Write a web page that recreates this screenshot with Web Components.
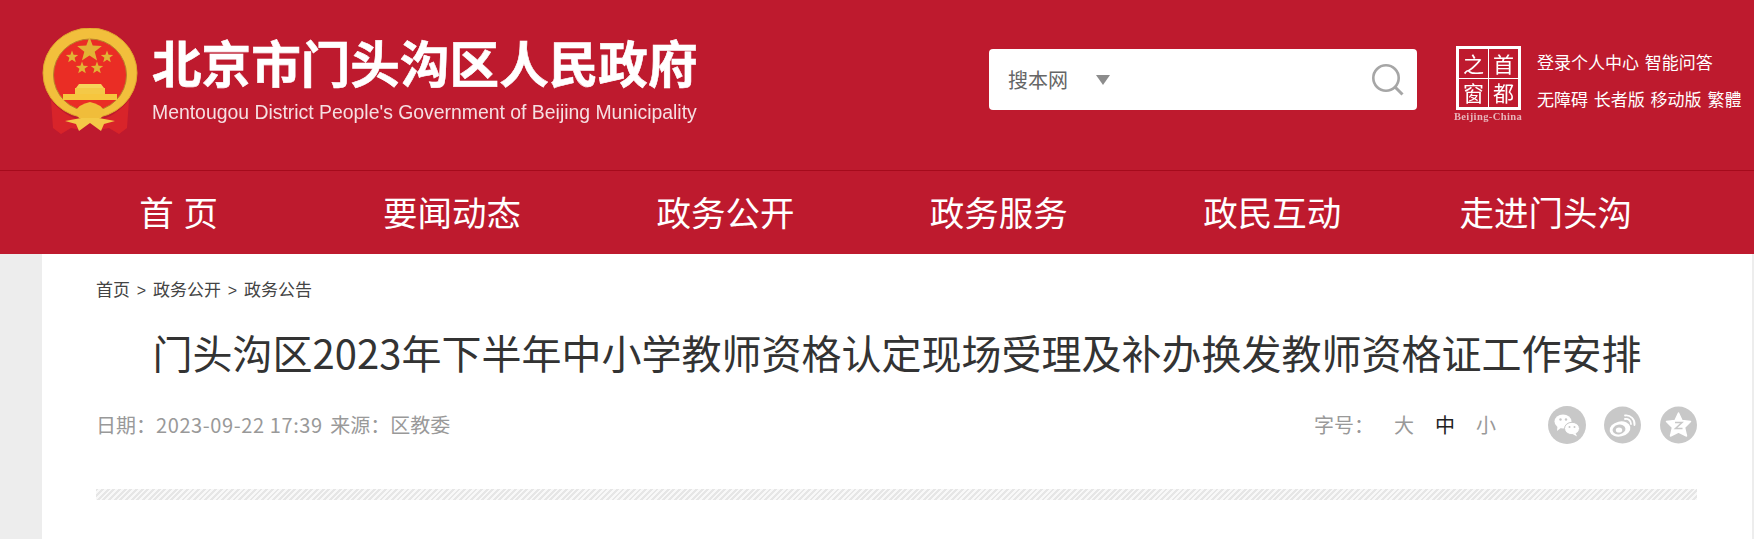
<!DOCTYPE html>
<html lang="zh-CN">
<head>
<meta charset="utf-8">
<title>门头沟区人民政府</title>
<style>
    html, body { margin: 0; padding: 0; background: #ededed; overflow: hidden; }
    body { font-family: "Noto Sans CJK SC", "Liberation Sans", sans-serif; height: 539px; }
</style>
</head>
<body>
<mtg-header></mtg-header>
<mtg-nav>
    <a>首 页</a><a>要闻动态</a><a>政务公开</a><a>政务服务</a><a>政民互动</a><a>走进门头沟</a>
</mtg-nav>
<mtg-page>
    <mtg-crumbs>
        <span>首页</span><span>政务公开</span><span>政务公告</span>
    </mtg-crumbs>
    <mtg-title>门头沟区2023年下半年中小学教师资格认定现场受理及补办换发教师资格证工作安排</mtg-title>
    <mtg-meta date="2023-09-22 17:39" source="区教委"></mtg-meta>
</mtg-page>

<script>
const SANS = '"Noto Sans CJK SC", "Liberation Sans", sans-serif';

class Base extends HTMLElement {
    constructor() {
        super();
        this.root = this.attachShadow({ mode: 'open' });
        this.root.innerHTML = `<style>${this.css()}</style>${this.render()}`;
    }
    css() { return ''; }
    render() { return '<slot></slot>'; }
}

class MtgEmblem extends Base {
    css() { return `:host { display: block; width: 98px; height: 108px; filter: blur(.5px); } svg { display: block; }`; }
    render() {
        const star = (x, y, r) => {
            let p = [];
            for (let i = 0; i < 10; i++) {
                const a = -Math.PI / 2 + i * Math.PI / 5;
                const q = i % 2 ? r * .42 : r;
                p.push((x + q * Math.cos(a)).toFixed(1) + ',' + (y + q * Math.sin(a)).toFixed(1));
            }
            return `<polygon points="${p.join(' ')}" fill="#e2b335"/>`;
        };
        return `<svg width="98" height="108" viewBox="0 0 98 108">
            <ellipse cx="49" cy="45" rx="47" ry="45" fill="#f2bf3c" stroke="#dfa62e" stroke-width="1"/>
            <ellipse cx="49" cy="47" rx="36.5" ry="36" fill="#ea2d25" stroke="#b9812b" stroke-width="1"/>
            ${star(48.5, 22, 13)}${star(31, 29, 6.5)}${star(66, 29, 6.5)}${star(41, 40, 6.5)}${star(56, 40, 6.5)}
            <path d="M38 56 H60 L63 60 H35 Z" fill="#f7d35a"/>
            <rect x="34" y="60" width="30" height="6" fill="#f4c947"/>
            <rect x="22" y="66" width="54" height="6" fill="#f6c63e"/>
            <path d="M10 72 C20 84 30 90 40 92 L40 102 L30 100 L20 106 L12 100 Z" fill="#d8242a"/>
            <path d="M88 72 C78 84 68 90 58 92 L58 102 L68 100 L78 106 L86 100 Z" fill="#d8242a"/>
            <path d="M34 84 Q38 76 49 74 Q60 76 64 84 L60 90 L38 90 Z" fill="#f0bd3a"/>
            <path d="M24 93 L40 90 L58 90 L74 93 L63 96 L60 103 L49 95 L38 103 L35 96 Z" fill="#f4c947"/>
        </svg>`;
    }
}

class MtgCapital extends Base {
    css() {
        return `:host { display: block; width: 72px; }
        .box { width: 59px; height: 58px; margin: 0 0 0 4px; padding: 3px; background: #fff; display: grid; grid-template: 1fr 1fr / 1fr 1fr; gap: 1px; filter: blur(.4px); }
        .box span { background: #be1a2e; color: #fff; display: flex; align-items: center; justify-content: center; font: 400 21px ${SANS}; line-height: 1; }
        .en { display: block; margin-top: 1px; text-align: center; color: #e7b4ba; font: 700 10.5px/11px "Liberation Serif", serif; white-space: nowrap; letter-spacing: .4px; filter: blur(.3px); }`;
    }
    render() {
        return `<div class="box"><span>之</span><span>首</span><span>窗</span><span>都</span></div><span class="en">Beijing-China</span>`;
    }
}

class MtgSearch extends Base {
    css() {
        return `:host { display: flex; align-items: center; width: 428px; height: 61px; box-sizing: border-box; background: #fff; border-radius: 4px; padding-left: 19px; color: #666; font: 400 20px/28px ${SANS}; }
        .scope { width: 88px; }
        .arrow { width: 0; height: 0; border: 7px solid transparent; border-top: 10px solid #8c8c8c; border-bottom: 0; }
        .grow { flex: 1; }
        svg { display: block; margin: 0 13px 0 0; }`;
    }
    render() {
        return `<span class="scope">搜本网</span><span class="arrow"></span><span class="grow"></span>
        <svg width="33" height="33" viewBox="0 0 33 33" fill="none" stroke="#a6a6a6"><circle cx="15" cy="15" r="12.7" stroke-width="2.6"/><path d="M24 24 L31.5 31.5" stroke-width="3"/></svg>`;
    }
}

class MtgLinks extends Base {
    css() {
        return `:host { display: block; color: #fff; font: 400 17px/37px ${SANS}; white-space: nowrap; }
        div { height: 37px; word-spacing: 2px; }`;
    }
    render() {
        return `<div>登录个人中心 智能问答</div><div>无障碍 长者版 移动版 繁體</div>`;
    }
}

class MtgHeader extends Base {
    css() {
        return `:host { display: flex; height: 170px; background: #be1a2e; box-sizing: border-box; padding: 28px 0 0 41px; align-items: flex-start; }
        .name { margin: 5px 0 0 13px; width: 546px; }
        h1 { margin: 0; height: 56px; color: #fff; font: 700 49.6px/56px ${SANS}; white-space: nowrap; -webkit-text-stroke: .6px #fff; filter: blur(.4px); }
        p { margin: 13px 0 0; color: #f6dfe2; font: 400 19.4px/20px "Liberation Sans", sans-serif; white-space: nowrap; filter: blur(.25px); }
        mtg-search { margin: 21px 0 0 291px; }
        mtg-capital { margin: 18px 0 0 35px; }
        mtg-links { margin: 15px 0 0 13px; }`;
    }
    render() {
        return `<mtg-emblem></mtg-emblem>
        <div class="name"><h1>北京市门头沟区人民政府</h1><p>Mentougou District People's Government of Beijing Municipality</p></div>
        <mtg-search></mtg-search><mtg-capital></mtg-capital><mtg-links></mtg-links>`;
    }
}

class MtgNav extends Base {
    css() {
        return `:host { display: flex; height: 84px; box-sizing: border-box; background: #be1a2e; border-top: 1px solid #a50b1c; padding-left: 42px; }
        ::slotted(a) { display: block; width: 273.4px; text-align: center; color: #fff; font: 400 34.5px/80px ${SANS}; white-space: pre; word-spacing: 2px; }`;
    }
}

class MtgPage extends Base {
    css() {
        return `:host { display: block; margin: 0 2px 0 42px; height: 285px; background: #fff; box-sizing: border-box; padding: 20px 55px 0 54px; }`;
    }
}

class MtgCrumbs extends Base {
    css() {
        return `:host { display: flex; color: #444; font: 400 17px/30px ${SANS}; }
        ::slotted(span:not(:last-child))::after { content: ">"; display: inline-block; width: 23px; text-align: center; font-family: "Liberation Sans", sans-serif; font-size: 16px; }`;
    }
}

class MtgTitle extends Base {
    css() {
        return `:host { display: block; margin: 16px -55px 0 -54px; text-align: center; color: #333; font: 400 40px/60px ${SANS}; white-space: nowrap; }`;
    }
}

class MtgMeta extends Base {
    css() {
        return `:host { display: block; margin-top: 24px; }
        .row { display: flex; align-items: center; height: 38px; color: #999; font: 400 20px/38px ${SANS}; white-space: nowrap; }
        .info { word-spacing: 3px; }
        .num { letter-spacing: .6px; word-spacing: 0; }
        .grow { flex: 1; }
        .size { display: flex; width: 234px; }
        .size b { font-weight: 400; }
        .size .label { width: 80px; }
        .size .s { width: 41px; }
        .size .on { color: #222; }
        svg { display: block; margin-left: 18px; filter: blur(.3px); }
        svg:first-of-type { margin-left: 0; }
        .hatch { margin-top: 45px; height: 11px; background: repeating-linear-gradient(135deg, #e6e6e6 0 2px, #f8f8f8 2px 4px); }`;
    }
    render() {
        const date = this.getAttribute('date') || '2023-09-22 17:39';
        const src = this.getAttribute('source') || '区教委';
        return `<div class="row"><span class="info">日期&#xFF1A;<span class="num">${date}</span> 来源&#xFF1A;${src}</span><span class="grow"></span>
            <div class="size"><b class="label">字号&#xFF1A;</b><b class="s">大</b><b class="s on">中</b><b class="s">小</b></div>
            <svg width="38" height="38" viewBox="0 0 38 38"><circle cx="19" cy="19" r="19" fill="#c8c8c8"/>
                <ellipse cx="15" cy="15.5" rx="8.5" ry="7" fill="#fff"/><path d="M9.5 20 L9 25 L14 21 Z" fill="#fff"/>
                <ellipse cx="24" cy="22.5" rx="7.5" ry="6.2" fill="#fff" stroke="#c8c8c8" stroke-width="1"/><path d="M27.5 27 L29 30.5 L24.5 28 Z" fill="#fff"/>
                <circle cx="12.5" cy="13.5" r="1.2" fill="#c8c8c8"/><circle cx="18" cy="13.5" r="1.2" fill="#c8c8c8"/><circle cx="21.5" cy="21" r="1" fill="#c8c8c8"/><circle cx="26.5" cy="21" r="1" fill="#c8c8c8"/></svg>
            <svg width="37" height="38" viewBox="0 0 37 38"><circle cx="18.5" cy="19" r="18.5" fill="#c8c8c8"/>
                <ellipse cx="16" cy="23" rx="10.5" ry="7.5" fill="#fff" transform="rotate(-12 16 23)"/>
                <ellipse cx="15" cy="23.5" rx="6.5" ry="4.8" fill="#c8c8c8" transform="rotate(-12 15 23.5)"/>
                <ellipse cx="15" cy="24" rx="3.2" ry="2.6" fill="#fff"/>
                <path d="M21 9.5 A8.5 8.5 0 0 1 30.5 19 M21 13 A5 5 0 0 1 27 18" fill="none" stroke="#fff" stroke-width="1.8" stroke-linecap="round"/></svg>
            <svg width="37" height="38" viewBox="0 0 37 38" style="margin-left:19px"><circle cx="18.5" cy="19" r="18.5" fill="#c8c8c8"/>
                <path d="M18.5 7 L22 14.5 L30.5 15.5 L24.5 21.5 L26.5 30 L18.5 26 L10.5 30 L12.5 21.5 L6.5 15.5 L15 14.5 Z" fill="#fff" stroke="#fff" stroke-width="1.5" stroke-linejoin="round"/>
                <path d="M15 16.5 H22 L15.5 22.5 H22.5" fill="none" stroke="#c8c8c8" stroke-width="1.5"/></svg>
        </div><div class="hatch"></div>`;
    }
}

customElements.define('mtg-emblem', MtgEmblem);
customElements.define('mtg-capital', MtgCapital);
customElements.define('mtg-search', MtgSearch);
customElements.define('mtg-links', MtgLinks);
customElements.define('mtg-header', MtgHeader);
customElements.define('mtg-nav', MtgNav);
customElements.define('mtg-page', MtgPage);
customElements.define('mtg-crumbs', MtgCrumbs);
customElements.define('mtg-title', MtgTitle);
customElements.define('mtg-meta', MtgMeta);
</script>
</body>
</html>
